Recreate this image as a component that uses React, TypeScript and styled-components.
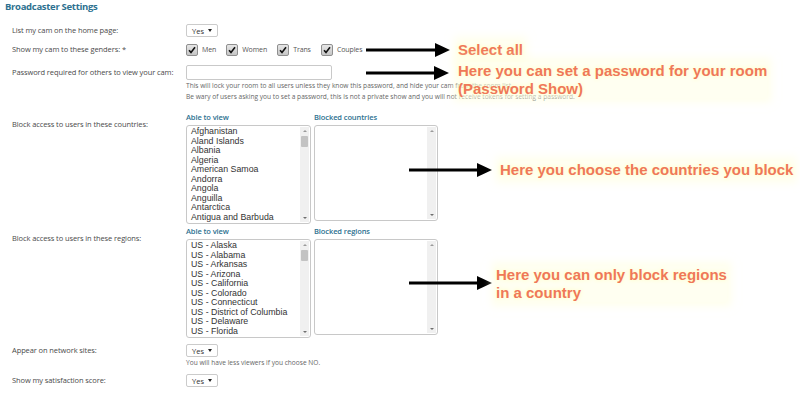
import styled, { createGlobalStyle } from "styled-components";

const GlobalStyle = createGlobalStyle`
  html, body {
    margin: 0;
    padding: 0;
    background: #fff;
  }
  body {
    font-family: "Open Sans", "DejaVu Sans", sans-serif;
    color: #4a4a4a;
  }
`;

const Page = styled.div`
  width: 800px;
  height: 393px;
  overflow: hidden;
  padding-left: 5px;
  box-sizing: border-box;
`;

const Title = styled.h2`
  margin: 0;
  font-size: 9.5px;
  line-height: 14px;
  font-weight: 700;
  color: #2d7190;
  letter-spacing: -0.3px;
`;

const Row = styled.div<{ $top: number }>`
  position: relative;
  display: grid;
  grid-template-columns: 174px 1fr;
  align-items: start;
  margin-top: ${(p) => p.$top}px;
  padding-left: 7px;
`;

const Label = styled.div<{ $pad?: number }>`
  font-size: 7.5px;
  line-height: 13px;
  padding-top: ${(p) => p.$pad ?? 0}px;
  white-space: nowrap;
  letter-spacing: -0.1px;
`;

const Field = styled.div`
  display: flex;
  flex-direction: column;
  align-items: flex-start;
`;

const SelectBox = styled.div`
  display: flex;
  align-items: center;
  justify-content: space-between;
  width: 32px;
  height: 13px;
  box-sizing: border-box;
  padding: 0 5px 0 5px;
  border: 1px solid #cbcbcb;
  border-radius: 2px;
  font-size: 7.5px;
  color: #333;
  &::after {
    content: "";
    border-left: 2.5px solid transparent;
    border-right: 2.5px solid transparent;
    border-top: 3px solid #222;
  }
`;

const Help = styled.div`
  font-size: 6.6px;
  line-height: 11px;
  color: #666;
  white-space: nowrap;
`;

const Checks = styled.div`
  display: flex;
  align-items: center;
  height: 13px;
  gap: 10px;
`;

const CheckItem = styled.label`
  display: flex;
  align-items: center;
  gap: 4px;
  font-size: 7px;
  color: #555;
  letter-spacing: -0.1px;
`;

const Box = styled.span`
  display: flex;
  align-items: center;
  justify-content: center;
  width: 12px;
  height: 12px;
  box-sizing: border-box;
  border: 1px solid #8f8f8f;
  border-radius: 2px;
  background: linear-gradient(#e6e6e6, #c6c6c6);
`;

const TextInput = styled.div`
  width: 146px;
  height: 15px;
  box-sizing: border-box;
  border: 1px solid #c9c9c9;
  border-radius: 2px;
  background: #fff;
`;

const Lists = styled.div`
  display: flex;
  gap: 3px;
`;

const ListCol = styled.div<{ $w: number }>`
  display: flex;
  flex-direction: column;
  width: ${(p) => p.$w}px;
`;

const ListHead = styled.div`
  font-size: 7.5px;
  line-height: 10px;
  height: 13px;
  font-weight: 600;
  color: #2d7190;
  letter-spacing: -0.1px;
`;

const ListBox = styled.div<{ $h: number }>`
  display: flex;
  height: ${(p) => p.$h}px;
  box-sizing: border-box;
  border: 1px solid #c8c8c8;
  border-radius: 3px;
  overflow: hidden;
  background: #fff;
`;

const Options = styled.ul`
  flex: 1;
  margin: 0;
  padding: 1px 0 0 4px;
  list-style: none;
  font-family: "Liberation Sans", Arial, sans-serif;
  font-size: 8.8px;
  line-height: 9.5px;
  color: #333;
  overflow: hidden;
  white-space: nowrap;
`;

const Track = styled.div`
  display: flex;
  flex-direction: column;
  align-items: center;
  width: 9px;
  margin: 1px 1px 1px 0;
  background: #f0f0f0;
`;

const Step = styled.span<{ $down?: boolean }>`
  margin: 3px 0;
  border-left: 2px solid transparent;
  border-right: 2px solid transparent;
  ${(p) =>
    p.$down ? "border-top: 2px solid #6f6f6f;" : "border-bottom: 2px solid #9a9a9a;"}
  ${(p) => (p.$down ? "margin-top: auto;" : "")}
`;

const Thumb = styled.span`
  width: 7px;
  height: 11px;
  margin-top: 1px;
  background: #c3c3c3;
  border-radius: 1px;
`;

const Callout = styled.div<{ $left: number; $top: number }>`
  position: absolute;
  left: ${(p) => p.$left}px;
  top: ${(p) => p.$top}px;
  display: flex;
  align-items: flex-start;
  pointer-events: none;
`;

const Note = styled.div<{ $lift: number; $gap: number }>`
  margin-top: ${(p) => -p.$lift}px;
  margin-left: ${(p) => p.$gap}px;
  font-family: "Liberation Sans", Arial, sans-serif;
  font-size: 15px;
  line-height: 18px;
  font-weight: 700;
  color: #ef7858;
  white-space: nowrap;
  background: rgba(255, 255, 232, 0.6);
  box-shadow: 0 0 8px 4px rgba(255, 255, 220, 0.55);
  text-shadow: 0 0 4px #ffffb8;
`;

const Arrow = ({ width }: { width: number }) => (
  <svg width={width} height={14} viewBox={`0 0 ${width} 14`}>
    <line x1={0} y1={7} x2={width - 12} y2={7} stroke="#000" strokeWidth={3} />
    <polygon points={`${width - 15},0 ${width},7 ${width - 15},14`} fill="#000" />
  </svg>
);

const Check = () => (
  <svg width="8" height="8" viewBox="0 0 8 8">
    <path d="M1 4.2 L3 6.4 L7 1.2" fill="none" stroke="#111" strokeWidth="1.6" />
  </svg>
);

const Select = ({ value }: { value: string }) => <SelectBox>{value}</SelectBox>;

const countries = [
  "Afghanistan",
  "Aland Islands",
  "Albania",
  "Algeria",
  "American Samoa",
  "Andorra",
  "Angola",
  "Anguilla",
  "Antarctica",
  "Antigua and Barbuda",
];

const regions = [
  "US - Alaska",
  "US - Alabama",
  "US - Arkansas",
  "US - Arizona",
  "US - California",
  "US - Colorado",
  "US - Connecticut",
  "US - District of Columbia",
  "US - Delaware",
  "US - Florida",
];

const genders = ["Men", "Women", "Trans", "Couples"];

const DualList = ({ items, blocked }: { items: string[]; blocked: string }) => (
  <Lists>
    <ListCol $w={125}>
      <ListHead>Able to view</ListHead>
      <ListBox $h={99}>
        <Options>
          {items.map((item) => (
            <li key={item}>{item}</li>
          ))}
        </Options>
        <Track>
          <Step />
          <Thumb />
          <Step $down />
        </Track>
      </ListBox>
    </ListCol>
    <ListCol $w={124}>
      <ListHead>{blocked}</ListHead>
      <ListBox $h={96}>
        <Options />
        <Track>
          <Step />
          <Step $down />
        </Track>
      </ListBox>
    </ListCol>
  </Lists>
);

export default function App() {
  return (
    <Page>
      <GlobalStyle />
      <Title>Broadcaster Settings</Title>

      <Row $top={10}>
        <Label>List my cam on the home page:</Label>
        <Field>
          <Select value="Yes" />
        </Field>
      </Row>

      <Row $top={6}>
        <Label $pad={-1}>Show my cam to these genders: *</Label>
        <Field>
          <Checks>
            {genders.map((g) => (
              <CheckItem key={g}>
                <Box>
                  <Check />
                </Box>
                {g}
              </CheckItem>
            ))}
          </Checks>
        </Field>
        <Callout $left={361} $top={0}>
          <Arrow width={84} />
          <Note $lift={2} $gap={8}>
            Select all
          </Note>
        </Callout>
      </Row>

      <Row $top={9}>
        <Label $pad={1}>Password required for others to view your cam:</Label>
        <Field>
          <TextInput />
          <Help>
            This will lock your room to all users unless they know this password, and hide your cam
            from the room list.
            <br />
            Be wary of users asking you to set a password, this is not a private show and you will
            not receive tokens for setting a password.
          </Help>
        </Field>
        <Callout $left={361} $top={1}>
          <Arrow width={83} />
          <Note $lift={4} $gap={9}>
            Here you can set a password for your room
            <br />
            (Password Show)
          </Note>
        </Callout>
      </Row>

      <Row $top={10}>
        <Label $pad={6}>Block access to users in these countries:</Label>
        <Field>
          <DualList items={countries} blocked="Blocked countries" />
        </Field>
        <Callout $left={404} $top={51}>
          <Arrow width={83} />
          <Note $lift={2} $gap={8}>
            Here you choose the countries you block
          </Note>
        </Callout>
      </Row>

      <Row $top={2}>
        <Label $pad={6}>Block access to users in these regions:</Label>
        <Field>
          <DualList items={regions} blocked="Blocked regions" />
        </Field>
        <Callout $left={404} $top={50}>
          <Arrow width={83} />
          <Note $lift={10} $gap={4}>
            Here you can only block regions
            <br />
            in a country
          </Note>
        </Callout>
      </Row>

      <Row $top={6}>
        <Label>Appear on network sites:</Label>
        <Field>
          <Select value="Yes" />
          <Help>You will have less viewers if you choose NO.</Help>
        </Field>
      </Row>

      <Row $top={6}>
        <Label>Show my satisfaction score:</Label>
        <Field>
          <Select value="Yes" />
        </Field>
      </Row>
    </Page>
  );
}
